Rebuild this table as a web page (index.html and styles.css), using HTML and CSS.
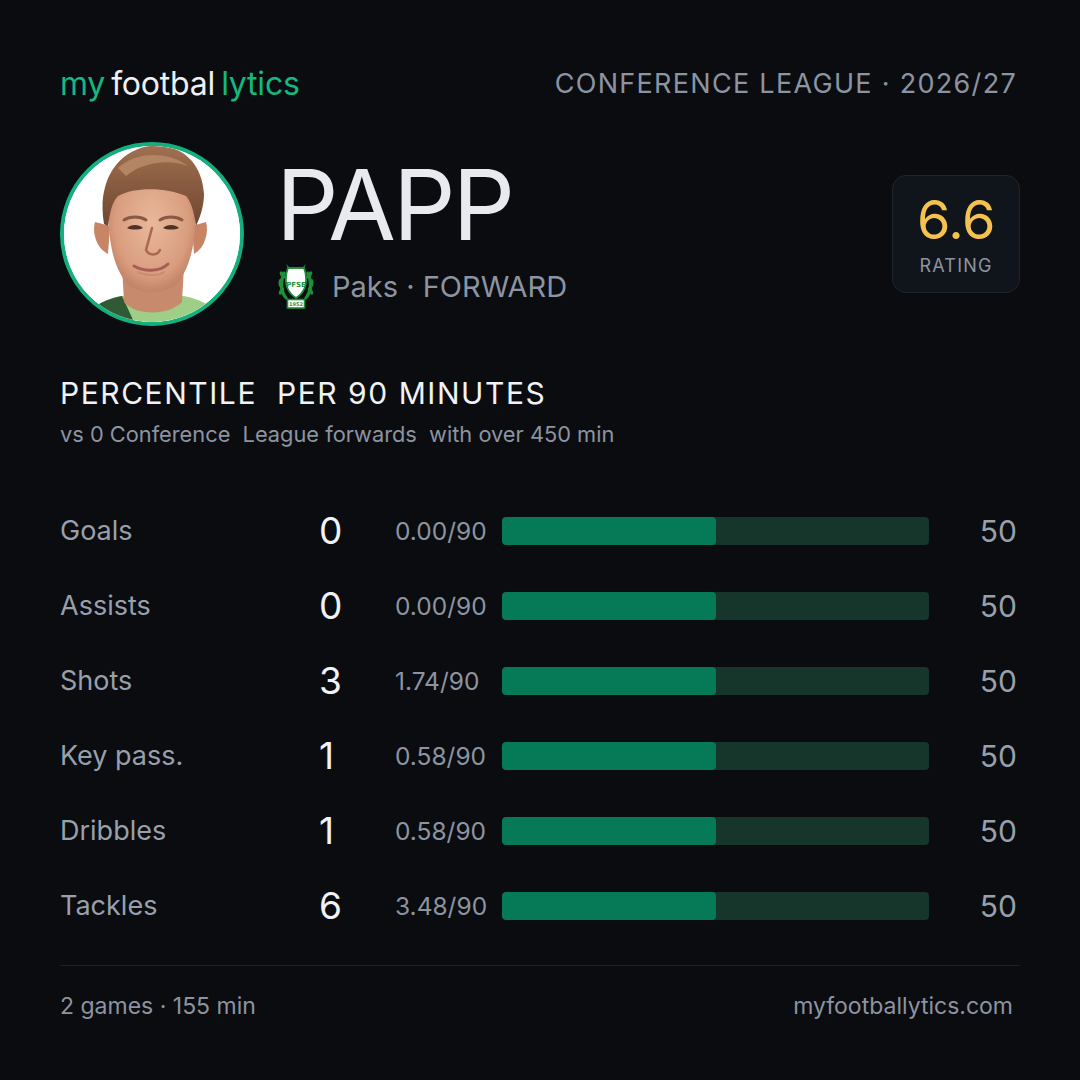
FILE: index.html
```html
<!DOCTYPE html>
<html lang="en">
<head>
<meta charset="utf-8">
<title>Papp – myfootballytics</title>
<link rel="stylesheet" href="styles.css">
</head>
<body>
<div class="card">
  <header class="top">
    <div class="logo"><span class="g">my</span><span class="w">footbal</span><span class="g">lytics</span></div>
    <div class="comp">CONFERENCE LEAGUE · 2026/27</div>
  </header>

  <section class="hero">
    <div class="avatar">
      <svg viewBox="0 0 176 176" width="176" height="176">
        <defs>
          <radialGradient id="skin" cx="0.5" cy="0.45" r="0.6">
            <stop offset="0" stop-color="#e9b89c"/>
            <stop offset="0.7" stop-color="#d99d7e"/>
            <stop offset="1" stop-color="#b9795d"/>
          </radialGradient>
          <linearGradient id="hair" x1="0" y1="0" x2="0" y2="1">
            <stop offset="0" stop-color="#a07050"/>
            <stop offset="1" stop-color="#6e4630"/>
          </linearGradient>
        </defs>
        <rect width="176" height="176" fill="#ffffff"/>
        <path d="M20 176 C26 160 40 154 56 150 L120 150 C138 154 150 160 158 176 Z" fill="#9fcf86"/>
        <path d="M20 176 C26 160 40 154 58 150 L70 176 Z" fill="#2f5a35"/>
        <path d="M58 120 L60 156 C72 170 104 170 118 156 L120 120 Z" fill="#c88a6c"/>
        <path d="M31 76 C28 86 32 102 44 108 L46 80 Z" fill="#c78566"/>
        <path d="M142 76 C145 86 141 102 130 108 L128 80 Z" fill="#c78566"/>
        <path d="M44 60 C44 34 62 20 88 20 C116 20 132 36 132 62 C132 96 126 124 112 138 C102 148 76 150 64 138 C50 124 44 96 44 60 Z" fill="url(#skin)"/>
        <path d="M40 78 C34 44 46 8 84 0 C114 -4 138 14 140 48 C140 60 136 72 132 80 C130 64 126 54 122 50 C104 42 72 40 54 50 C48 56 46 66 44 80 Z" fill="url(#hair)"/>
        <path d="M54 22 C70 6 104 4 124 20 C108 14 82 14 62 30 Z" fill="#b48562"/>
        <path d="M60 74 C66 70 76 70 82 74" stroke="#8a5a44" stroke-width="3" fill="none" stroke-linecap="round"/>
        <path d="M96 74 C102 70 112 70 118 74" stroke="#8a5a44" stroke-width="3" fill="none" stroke-linecap="round"/>
        <path d="M63 82 C67 78 75 78 79 82 C75 84 67 84 63 82 Z" fill="#4e3226"/>
        <path d="M99 82 C103 78 111 78 115 82 C111 84 103 84 99 82 Z" fill="#4e3226"/>
        <path d="M88 82 L82 104 C85 110 93 110 96 104" stroke="#a9694f" stroke-width="2.5" fill="none" stroke-linecap="round"/>
        <path d="M70 120 C80 126 96 126 104 118" stroke="#a55e52" stroke-width="3" fill="none" stroke-linecap="round"/>
        <path d="M74 126 C82 130 94 130 100 126" stroke="#c98a78" stroke-width="2" fill="none" stroke-linecap="round"/>
      </svg>
    </div>
    <div class="info">
      <h1 class="name">PAPP</h1>
      <div class="club">
        <svg class="crest" viewBox="0 0 36 46" width="36" height="46">
          <g fill="#1f8f3a">
            <path d="M6 8 C0 16 0 30 8 37 L10 35 C4 28 4 18 8 10 Z"/>
            <path d="M30 8 C36 16 36 30 28 37 L26 35 C32 28 32 18 28 10 Z"/>
            <ellipse cx="4.5" cy="12" rx="2" ry="4" transform="rotate(-30 4.5 12)"/>
            <ellipse cx="2.5" cy="20" rx="2" ry="4"/>
            <ellipse cx="3.5" cy="28" rx="2" ry="4" transform="rotate(30 3.5 28)"/>
            <ellipse cx="31.5" cy="12" rx="2" ry="4" transform="rotate(30 31.5 12)"/>
            <ellipse cx="33.5" cy="20" rx="2" ry="4"/>
            <ellipse cx="32.5" cy="28" rx="2" ry="4" transform="rotate(-30 32.5 28)"/>
            <path d="M8 1 L13 6 L10.5 7 Z"/>
            <path d="M28 1 L23 6 L25.5 7 Z"/>
          </g>
          <path d="M10 5 L26 5 L27.5 10 C29.5 21 26 30 18 35 C10 30 6.5 21 8.5 10 Z" fill="#ffffff" stroke="#1f8f3a" stroke-width="1.8"/>
          <text x="18" y="24" text-anchor="middle" class="crest-t">PFSE</text>
          <rect x="9.5" y="36.5" width="17" height="8.5" fill="#ffffff" stroke="#1f8f3a" stroke-width="1.6"/>
          <text x="18" y="43" text-anchor="middle" class="crest-y">1952</text>
        </svg>
        <span>Paks · FORWARD</span>
      </div>
    </div>
    <div class="rating">
      <div class="rv">6.6</div>
      <div class="rl">RATING</div>
    </div>
  </section>

  <section class="heading">
    <h2>PERCENTILE&nbsp; PER 90 MINUTES</h2>
    <p>vs 0 Conference&nbsp; League forwards&nbsp; with over 450 min</p>
  </section>

  <section class="stats">
    <div class="row"><span class="lbl">Goals</span><span class="num">0</span><span class="p90">0.00/90</span><span class="bar"><span class="fill" style="width:50%"></span></span><span class="pct">50</span></div>
    <div class="row"><span class="lbl">Assists</span><span class="num">0</span><span class="p90">0.00/90</span><span class="bar"><span class="fill" style="width:50%"></span></span><span class="pct">50</span></div>
    <div class="row"><span class="lbl">Shots</span><span class="num">3</span><span class="p90">1.74/90</span><span class="bar"><span class="fill" style="width:50%"></span></span><span class="pct">50</span></div>
    <div class="row"><span class="lbl">Key pass.</span><span class="num">1</span><span class="p90">0.58/90</span><span class="bar"><span class="fill" style="width:50%"></span></span><span class="pct">50</span></div>
    <div class="row"><span class="lbl">Dribbles</span><span class="num">1</span><span class="p90">0.58/90</span><span class="bar"><span class="fill" style="width:50%"></span></span><span class="pct">50</span></div>
    <div class="row"><span class="lbl">Tackles</span><span class="num">6</span><span class="p90">3.48/90</span><span class="bar"><span class="fill" style="width:50%"></span></span><span class="pct">50</span></div>
  </section>

  <footer class="foot">
    <span>2 games · 155 min</span>
    <span>myfootballytics.com</span>
  </footer>
</div>
</body>
</html>
```

FILE: styles.css
```css
* { box-sizing: border-box; margin: 0; padding: 0; }
html, body { width: 1080px; height: 1080px; background: #0a0c10; }
body { font-family: Inter, "Noto Sans", sans-serif; color: #e7e9ee; overflow: hidden; }

.card { width: 1080px; height: 1080px; padding: 60px 60px 0 60px; display: flex; flex-direction: column; }

.top { display: flex; justify-content: space-between; align-items: center; height: 46px; }
.logo { font-size: 32px; letter-spacing: -0.2px; display: flex; gap: 6px; }
.logo .g { color: #14b880; }
.logo .w { color: #eef0f4; }
.comp { font-size: 27px; letter-spacing: 1.3px; color: #8c94a1; margin-right: 3px; }

.hero { display: flex; align-items: flex-start; margin-top: 36px; }
.avatar { width: 184px; height: 184px; border-radius: 50%; border: 4px solid #13b07d; overflow: hidden; background: #fff; flex: none; }
.avatar svg { display: block; }
.info { margin-left: 32px; flex: 1; }
.name { font-size: 98px; font-weight: 400; letter-spacing: -3px; color: #e8eaef; line-height: 1; margin-top: 14px; }
.club { display: flex; align-items: center; gap: 18px; margin-top: 9px; font-size: 29px; color: #8c94a1; }
.crest { flex: none; margin-left: 2px; }
.crest-t { font-family: "DejaVu Sans", sans-serif; font-size: 7px; font-weight: 700; fill: #1f8f3a; }
.crest-y { font-family: "DejaVu Sans", sans-serif; font-size: 5px; font-weight: 700; fill: #1f8f3a; }

.rating { width: 128px; height: 118px; margin-top: 33px; border-radius: 14px; background: #10141b; border: 1px solid #20252d; display: flex; flex-direction: column; align-items: center; justify-content: center; }
.rv { font-size: 54px; color: #f4c24f; line-height: 1; letter-spacing: -0.5px; }
.rl { font-size: 18px; letter-spacing: 1.2px; color: #8c94a1; margin-top: 8px; }

.heading { margin-top: 49px; }
.heading h2 { font-size: 30px; font-weight: 400; letter-spacing: 1.55px; color: #f1f2f5; line-height: 36px; }
.heading p { font-size: 21.8px; color: #8c94a1; margin-top: 10px; line-height: 26px; }

.stats { margin-top: 61px; display: flex; flex-direction: column; gap: 47px; }
.row { display: grid; grid-template-columns: 258px 77px 107px 427px 1fr; align-items: center; height: 28px; }
.lbl { font-size: 27px; color: #98a0ac; }
.num { font-size: 37px; color: #f1f2f5; padding-left: 1px; }
.p90 { font-size: 24.5px; color: #8c94a1; }
.bar { display: block; height: 28px; background: #16352b; border-radius: 4px; overflow: hidden; }
.fill { display: block; height: 100%; background: #067a56; border-radius: 4px; }
.pct { font-size: 30px; color: #98a0ac; text-align: right; padding-right: 3px; }

.foot { margin-top: 54px; border-top: 1px solid #1d2129; padding-top: 26px; display: flex; justify-content: space-between; font-size: 23px; color: #8c94a1; }
.foot span:last-child { margin-right: 7px; }
```
